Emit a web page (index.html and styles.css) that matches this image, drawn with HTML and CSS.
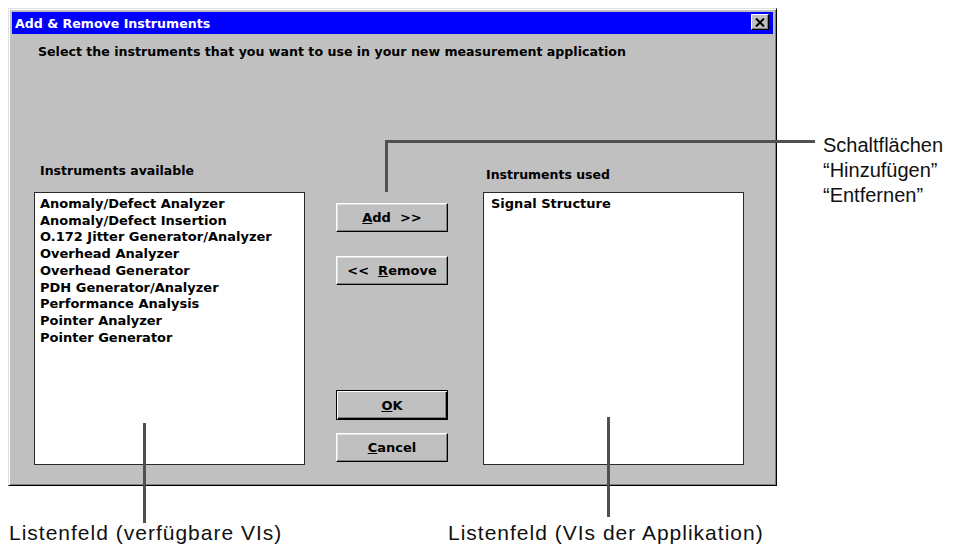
FILE: index.html
```html
<!DOCTYPE html>
<html lang="en">
<head>
    <meta charset="UTF-8">
    <meta name="viewport" content="width=device-width, initial-scale=1.0">
    <title>Add &amp; Remove Instruments</title>
    <link rel="stylesheet" href="styles.css">
</head>
<body>

    <div class="figure">
        <div class="top-row">
            <div class="dialog">
                <div class="title-bar">
                    <span class="title-text">Add &amp; Remove Instruments</span>
                    <span class="close-btn">
                        <svg width="10" height="9" viewBox="0 0 10 9">
                            <path d="M1 0.5 L9 8.5 M9 0.5 L1 8.5" stroke="#000" stroke-width="2" fill="none"/>
                        </svg>
                    </span>
                </div>
                <div class="dialog-body">
                    <p class="intro">Select the instruments that you want to use in your new measurement application</p>

                    <div class="panes">
                        <div class="pane-label label-left">Instruments available</div>
                        <div></div>
                        <div class="pane-label label-right">Instruments used</div>

                        <ul class="listbox list-available">
                            <li>Anomaly/Defect Analyzer</li>
                            <li>Anomaly/Defect Insertion</li>
                            <li>O.172 Jitter Generator/Analyzer</li>
                            <li>Overhead Analyzer</li>
                            <li>Overhead Generator</li>
                            <li>PDH Generator/Analyzer</li>
                            <li>Performance Analysis</li>
                            <li>Pointer Analyzer</li>
                            <li>Pointer Generator</li>
                        </ul>

                        <div class="buttons">
                            <button class="btn btn-add"><u>A</u>dd &nbsp;&gt;&gt;</button>
                            <button class="btn btn-remove">&lt;&lt; &nbsp;<u>R</u>emove</button>
                            <button class="btn btn-default btn-ok"><u>O</u>K</button>
                            <button class="btn btn-cancel"><u>C</u>ancel</button>
                        </div>

                        <ul class="listbox list-used">
                            <li>Signal Structure</li>
                        </ul>
                    </div>
                </div>
            </div>

            <div class="note">
                Schaltflächen<br>
                &ldquo;Hinzufügen&rdquo;<br>
                &ldquo;Entfernen&rdquo;
            </div>
        </div>

        <div class="captions">
            <div class="caption">Listenfeld (verfügbare VIs)</div>
            <div class="caption">Listenfeld (VIs der Applikation)</div>
        </div>

        <!-- callout lines -->
        <div class="leader leader-buttons-h"></div>
        <div class="leader leader-buttons-v"></div>
        <div class="leader leader-left"></div>
        <div class="leader leader-right"></div>
    </div>

</body>
</html>
```

FILE: styles.css
```css
body {
    margin: 0;
    background-color: #fff;
    font-family: "Liberation Sans", Arial, sans-serif;
}
.figure {
    position: relative;
    width: 969px;
    height: 546px;
    overflow: hidden;
}
.top-row {
    display: flex;
    align-items: flex-start;
    padding: 8px 0 0 8px;
}

/* dialog window */
.dialog {
    width: 769px;
    height: 478px;
    box-sizing: border-box;
    padding: 3px;
    background-color: #c0c0c0;
    border: 1px solid;
    border-color: #dfdfdf #000 #000 #dfdfdf;
    box-shadow: inset 1px 1px #fff, inset -1px -1px #808080;
    flex-shrink: 0;
    font-family: "DejaVu Sans", Verdana, sans-serif;
}
.title-bar {
    display: flex;
    align-items: center;
    justify-content: space-between;
    height: 22px;
    padding: 0 4px 0 3px;
    background-color: #0000ff;
}
.title-text {
    color: #fff;
    font-weight: bold;
    font-size: 12.6px;
}
.close-btn {
    display: flex;
    align-items: center;
    justify-content: center;
    width: 18px;
    height: 16px;
    box-sizing: border-box;
    margin-top: -2px;
    background-color: #c0c0c0;
    border: 1px solid;
    border-color: #fff #000 #000 #fff;
    box-shadow: inset -1px -1px #808080;
}
.dialog-body {
    padding: 10px 0 0 22px;
}
.intro {
    margin: 0 0 103px 4px;
    font-size: 12.6px;
    font-weight: bold;
    line-height: 16px;
    color: #000;
}

.panes {
    display: grid;
    grid-template-columns: 302px 147px 261px;
    grid-template-rows: auto 273px;
}
.pane-label {
    align-self: end;
    font-size: 12.5px;
    font-weight: bold;
    line-height: 16px;
    color: #000;
}
.label-left {
    margin: 0 0 13px 6px;
}
.label-right {
    margin: 0 0 9px 3px;
}

.listbox {
    margin: 0;
    padding: 3px 6px 0 5px;
    list-style: none;
    box-sizing: border-box;
    background-color: #fff;
    border: 1px solid #2a2a2a;
    font-size: 13px;
    font-weight: bold;
    line-height: 16.7px;
    color: #000;
}
.list-available {
    width: 271px;
}
.list-used {
    width: 261px;
    padding-left: 7px;
}

.buttons {
    display: flex;
    flex-direction: column;
    width: 112px;
}
.btn {
    height: 29px;
    box-sizing: border-box;
    padding: 0;
    background-color: #c0c0c0;
    border: 1px solid;
    border-color: #fff #000 #000 #fff;
    box-shadow: inset -1px -1px #808080, inset 1px 1px #dfdfdf;
    font-family: "DejaVu Sans", Verdana, sans-serif;
    font-size: 13px;
    font-weight: bold;
    color: #000;
    white-space: nowrap;
}
.btn-add {
    margin-top: 11px;
}
.btn-remove {
    margin-top: 24px;
}
.btn-ok {
    margin-top: 105px;
    height: 30px;
}
.btn-cancel {
    margin-top: 13px;
}
.btn-default {
    border: 1px solid #000;
    box-shadow: inset 1px 1px #fff, inset -1px -1px #000, inset -2px -2px #808080;
}

/* annotations */
.note {
    margin: 125px 0 0 46px;
    font-size: 20px;
    line-height: 25px;
    color: #111;
    white-space: nowrap;
}
.captions {
    display: grid;
    grid-template-columns: 439px auto;
    margin-top: 35px;
    padding-left: 9px;
}
.caption {
    font-size: 21px;
    letter-spacing: 1px;
    line-height: 23px;
    color: #111;
    white-space: nowrap;
}
.leader {
    position: absolute;
    background-color: #505050;
}
.leader-buttons-h {
    left: 385px;
    top: 140px;
    width: 430px;
    height: 3px;
}
.leader-buttons-v {
    left: 385px;
    top: 140px;
    width: 3px;
    height: 52px;
}
.leader-left {
    left: 143px;
    top: 423px;
    width: 3px;
    height: 100px;
}
.leader-right {
    left: 607px;
    top: 417px;
    width: 3px;
    height: 100px;
}
```
